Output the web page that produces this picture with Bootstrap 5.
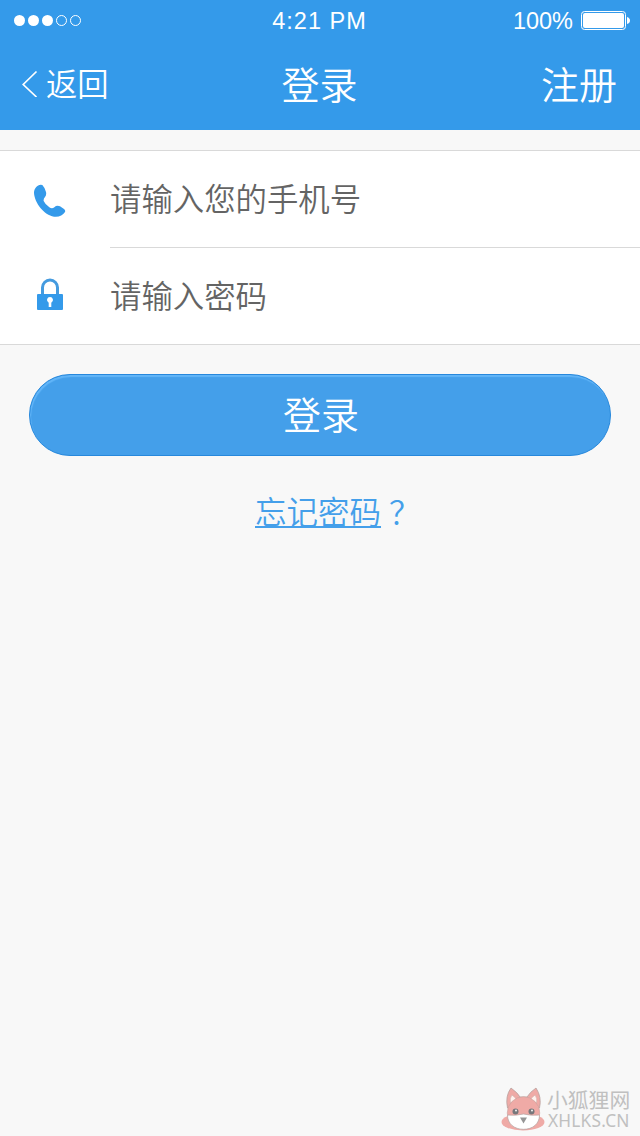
<!DOCTYPE html>
<html lang="zh-CN">
<head>
<meta charset="utf-8">
<meta name="viewport" content="width=device-width, initial-scale=1">
<title>登录</title>
<link href="https://cdn.jsdelivr.net/npm/bootstrap@5.3.0/dist/css/bootstrap.min.css" rel="stylesheet">
<style>
  body { background: #f8f8f8; font-family: "Noto Sans CJK SC", sans-serif; font-weight: 350; overflow: hidden; }
  .top-area { background: #349aea; height: 130px; }
  .status-bar { height: 40px; font: 400 23.5px/40px "Liberation Sans", sans-serif; padding: 1px 10px 0 14px; }
  .clock { letter-spacing: 1px; margin-left: -5px; }
  .side { flex: 1 1 0; }
  .title-bar { height: 90px; padding: 0 23px 0 22px; line-height: 86px; font-size: 38px; }
  .back-text { font-size: 31.3px; }
  .form-list { margin-top: 20px; border-top: 1px solid #d9d9d9; border-bottom: 1px solid #d9d9d9; }
  .field-icon { width: 110px; padding-left: 33px; }
  .field-icon.lock { padding-bottom: 2px; }
  .field-body { height: 96px; }
  .field-body.first { height: 97px; border-bottom: 1px solid #d9d9d9; }
  .field-body .form-control { font-size: 31.4px; font-weight: 350; line-height: 48px; color: #646464; height: 93px; }
  .field-body .form-control::placeholder { color: #646464; opacity: 1; }
  .login-btn { margin: 29px 29px 0; width: 582px; height: 82px; background: #449fea; border: 1px solid #2788dc; font-size: 38px; font-weight: 350; line-height: 76px; padding: 0 0 4px; text-indent: 2px; box-shadow: inset 1px 2px 1px #62b5f8; }
  .login-btn:hover { background: #449fea; border-color: #2788dc; }
  .forgot { margin: 30px 0 0 255px; height: 48px; line-height: 48px; font-size: 31.5px; color: #449fea; }
  .forgot a { color: inherit; text-decoration: underline; text-decoration-thickness: 2px; text-underline-offset: 2px; text-decoration-skip-ink: none; }
  .forgot span { margin-left: 8px; }
  .brand-line { width: 130px; height: 50px; right: 9px; bottom: 0; color: #c0c0c0; }
  .brand-cn { font-size: 20.8px; line-height: 26px; font-weight: 400; }
  .brand-en { font: 400 17.3px/18px "Noto Sans", sans-serif; letter-spacing: .2px; padding-left: 1px; }
</style>
<script src="https://cdn.jsdelivr.net/npm/bootstrap@5.3.0/dist/js/bootstrap.bundle.min.js"></script>
</head>
<body class="min-vh-100 position-relative">
<header class="top-area text-white">
  <div class="status-bar d-flex align-items-center">
    <div class="side d-flex">
      <svg width="70" height="14" viewBox="0 0 70 14" fill="#fff"><circle cx="5.500" cy="6.500" r="5.500"/><circle cx="19.500" cy="6.500" r="5.500"/><circle cx="33.500" cy="6.500" r="5.500"/><g fill="none" stroke="#fff"><circle cx="47.500" cy="6.500" r="5"/><circle cx="61.500" cy="6.500" r="5"/></g></svg>
    </div>
    <div class="clock">4:21 PM</div>
    <div class="side d-flex justify-content-end align-items-center gap-2">
      <span>100%</span>
      <svg width="49" height="19" viewBox="0 0 49 19"><rect x=".5" y=".5" width="44" height="18" rx="3" fill="none" stroke="#fff"/><rect x="2" y="2" width="41" height="15" rx="2" fill="#fff"/><path d="M46 6q3 1 3 3.500t-3 3.500z" fill="#fff"/></svg>
    </div>
  </div>
  <nav class="title-bar d-flex align-items-start">
    <div class="side d-flex align-items-center">
      <svg width="24" height="28" viewBox="0 0 24 28"><path d="M14.500 2.500L1.200 15.500L14.500 28" fill="none" stroke="#fff" stroke-width="1.700"/></svg>
      <span class="back-text">返回</span>
    </div>
    <div>登录</div>
    <div class="side text-end">注册</div>
  </nav>
</header>
<main>
  <form>
    <div class="form-list bg-white">
      <div class="d-flex align-items-center">
        <div class="field-icon">
          <svg class="d-block" width="34" height="34" viewBox="17 8 102 102"><path d="M40 13C30 14 20 24 20 38C22 68 50 104 80 109C95 111 106 105 113 95Q115 90 110 86L98 78Q88 74 81 81Q74 87 66 81Q54 73 49 62Q48 55 53 50Q58 44 56 35Q52 21 45 14Q43 13 40 13z" fill="#349aea"/></svg>
        </div>
        <div class="field-body first flex-grow-1"><input type="tel" class="form-control border-0 rounded-0 bg-transparent p-0" placeholder="请输入您的手机号" aria-label="手机号"></div>
      </div>
      <div class="d-flex align-items-center">
        <div class="field-icon lock">
          <svg class="d-block" width="34" height="34" viewBox="0 0 34 34"><path d="M9.500 18V9.500a7.500 7.500 0 0 1 15 0V18" fill="none" stroke="#459bdf" stroke-width="3"/><rect x="4" y="16" width="26" height="16" rx="1" fill="#349aea"/><path d="M17 19a3 3 0 0 0-1.300 5.700V29h2.600v-4.300A3 3 0 0 0 17 19z" fill="#fff"/></svg>
        </div>
        <div class="field-body flex-grow-1"><input type="password" class="form-control border-0 rounded-0 bg-transparent p-0" placeholder="请输入密码" aria-label="密码"></div>
      </div>
    </div>
    <button type="button" class="login-btn btn btn-primary rounded-pill d-block">登录</button>
    <div class="forgot"><a href="#">忘记密码</a><span>？</span></div>
  </form>
</main>
<footer class="brand-line position-absolute d-flex">
  <svg class="flex-shrink-0" width="46" height="48" viewBox="0 0 46 48">
    <ellipse cx="22" cy="36" rx="21.500" ry="8.500" fill="#efaaa6"/>
    <path d="M6.500 22Q4 10 10 2q7 5 9 9h7Q29 6 35 2q6 9 3.500 20z" fill="#efaaa6" stroke="#b8a29f" stroke-width=".8"/>
    <path d="M9.500 17Q8.500 12 11 9q4 3 4.500 5z M35.500 17q1-5-1.500-8-4 3-4.500 5z" fill="#fff2ee" stroke="#c9aaa6" stroke-width=".5"/>
    <circle cx="22.500" cy="27" r="16.300" fill="#efaaa6" stroke="#c0a09c" stroke-width=".5"/>
    <path d="M6.500 29q8 1 16-1 8 2 16 1c0 9-7 14.300-16 14.300S6.500 38 6.500 29z" fill="#fff" stroke="#b5a5a3" stroke-width=".7"/>
    <circle cx="14.500" cy="25.500" r="3" fill="#77777b"/><circle cx="30.500" cy="25.500" r="3" fill="#77777b"/><circle cx="15" cy="24.500" r=".9" fill="#fff"/><circle cx="31" cy="24.500" r=".9" fill="#fff"/>
    <path d="M19 31.500h7l-3.500 6z" fill="#969696"/>
  </svg>
  <div class="text-nowrap"><div class="brand-cn">小狐狸网</div><div class="brand-en">XHLKS.CN</div></div>
</footer>
</body>
</html>
